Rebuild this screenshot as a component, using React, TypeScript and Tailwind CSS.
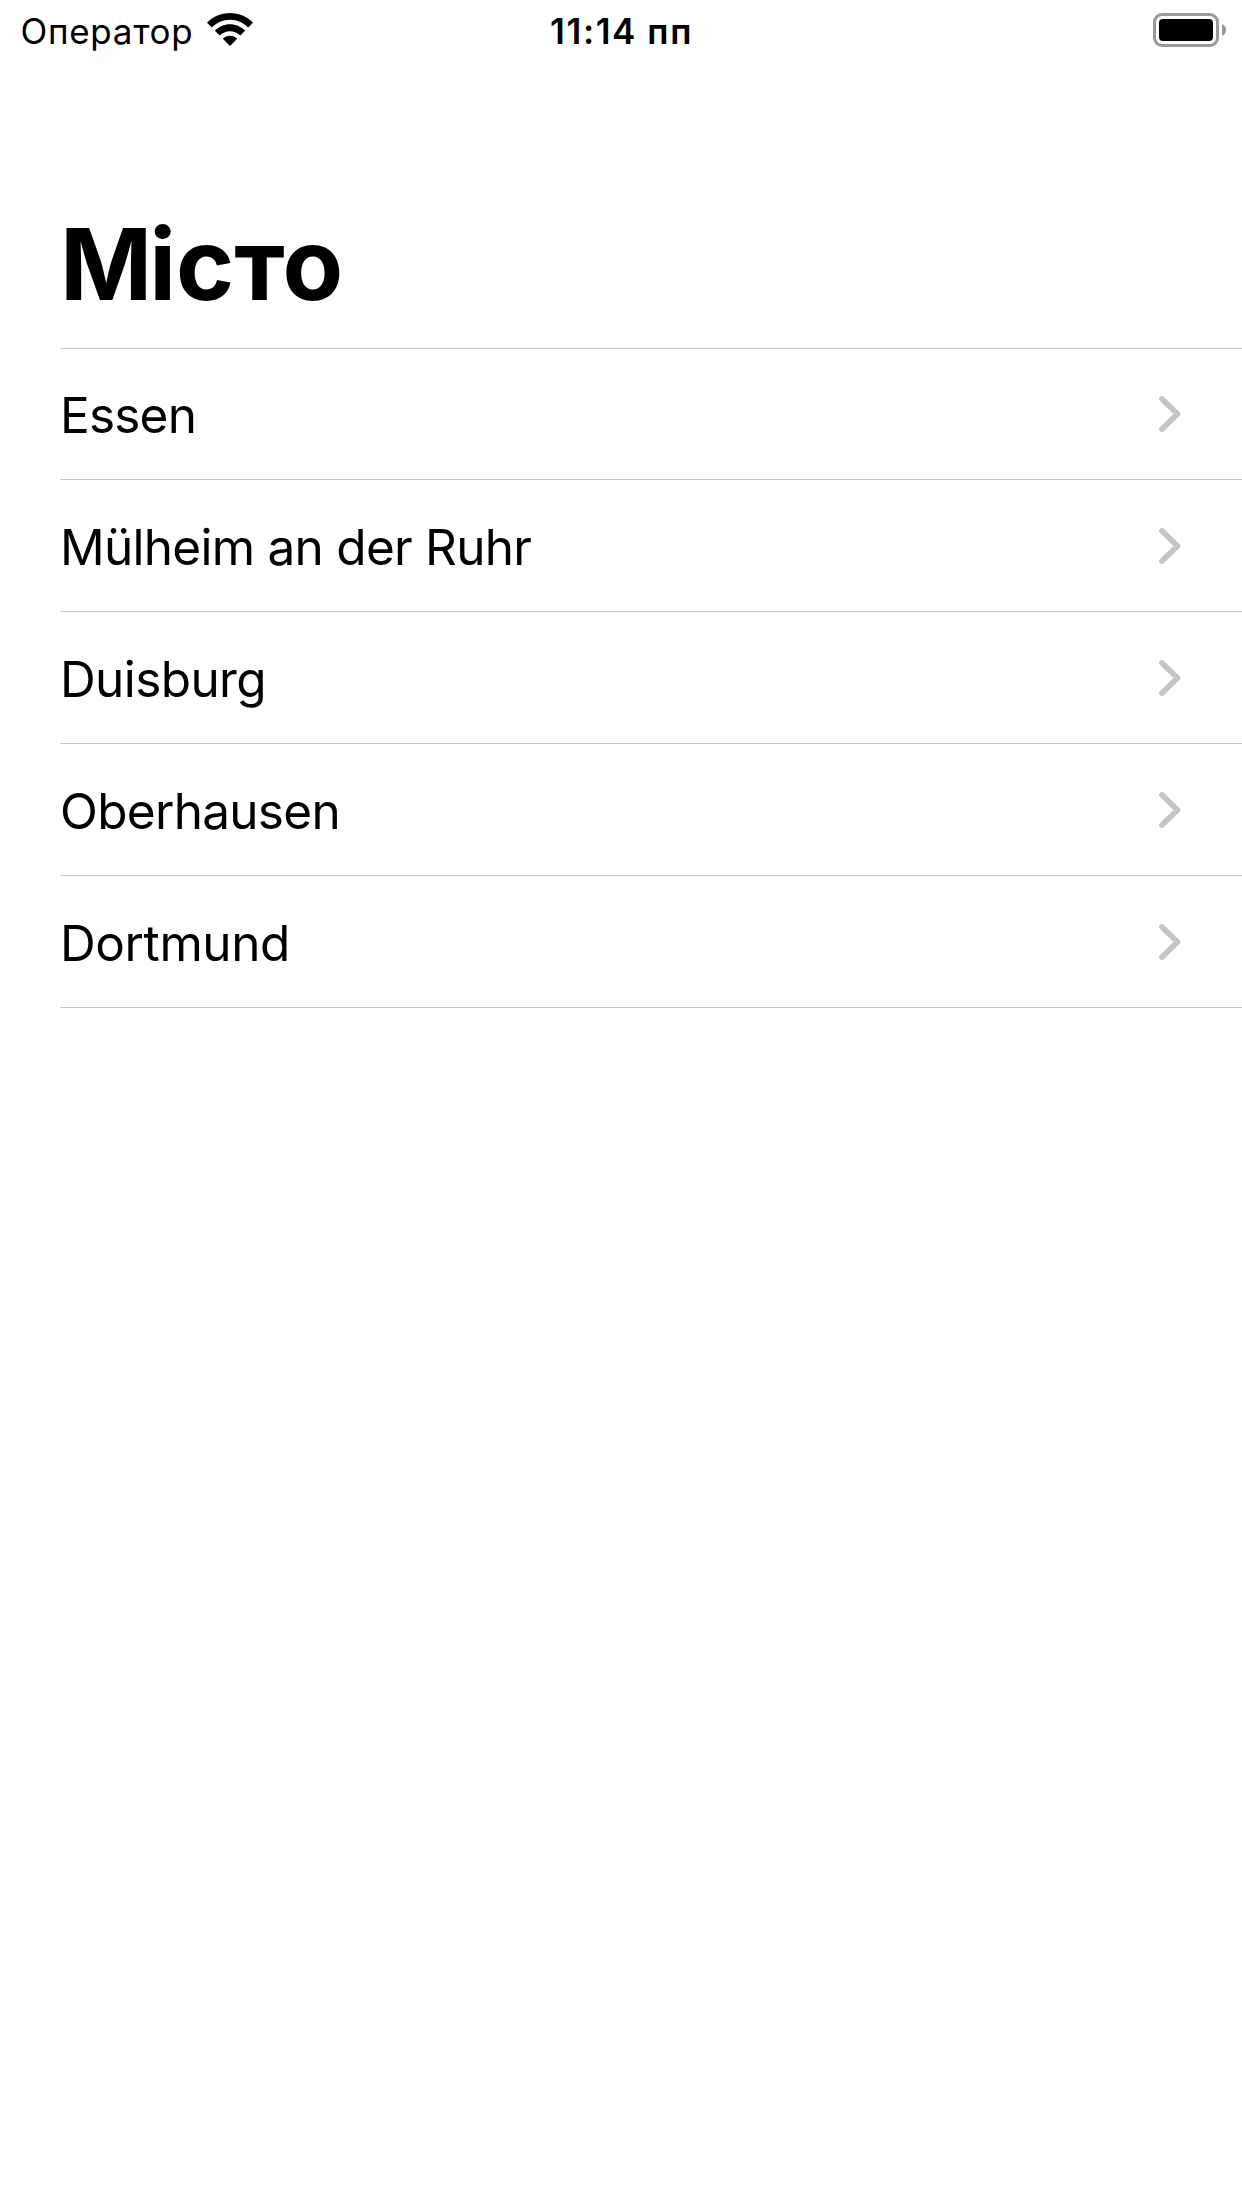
const CITIES = [
  { name: "Essen", tracking: "tracking-[-0.8px]" },
  { name: "Mülheim an der Ruhr", tracking: "tracking-[-0.73px]" },
  { name: "Duisburg", tracking: "tracking-[-0.6px]" },
  { name: "Oberhausen", tracking: "tracking-[-0.7px]" },
  { name: "Dortmund", tracking: "tracking-[-0.4px]" },
];

function WifiIcon() {
  return (
    <svg viewBox="0 0 46 33" className="h-[33px] w-[46px]" aria-hidden="true">
      <path d="M0 9.7C6 3.5 14 0 23 0s17 3.5 23 9.7l-4.9 4.9C36.5 9.7 30 6.8 23 6.8S9.5 9.7 4.9 14.6z" />
      <path d="M7.9 17.7C11.8 13.6 17.1 11.2 23 11.2s11.2 2.4 15.1 6.5l-4.9 4.9C30.6 19.8 27 18.2 23 18.2s-7.6 1.6-10.2 4.4z" />
      <path d="M15.8 25.7C17.7 23.7 20.2 22.7 23 22.7s5.3 1 7.2 3L23 33z" />
    </svg>
  );
}

function BatteryIcon() {
  return (
    <svg viewBox="0 0 73 34" className="h-[34px] w-[73px]" aria-hidden="true">
      <rect x="1.5" y="1.5" width="63" height="31" rx="7.5" fill="none" stroke="#999" strokeWidth="3" />
      <rect x="6" y="6" width="54" height="22" rx="4" />
      <path d="M69 11c2.4 1 4 3.3 4 6s-1.6 5-4 6z" fill="#999" />
    </svg>
  );
}

function Chevron() {
  return (
    <svg viewBox="0 0 22 36" className="h-9 w-[22px]" aria-hidden="true">
      <path
        d="M3 3l15.5 15L3 33"
        fill="none"
        stroke="#c4c4c6"
        strokeWidth="5.7"
        strokeLinecap="round"
        strokeLinejoin="round"
      />
    </svg>
  );
}

function StatusBar() {
  return (
    <header className="grid h-[60px] grid-cols-3 pt-[9px] text-[35px] leading-[44px]">
      <div className="flex items-start pl-5">
        <span className="w-[187px] pl-[0.5px] tracking-[0.7px] whitespace-nowrap">Оператор</span>
        <span className="pt-1">
          <WifiIcon />
        </span>
      </div>
      <div className="pl-px text-center font-semibold tracking-[1.6px]">11:14 пп</div>
      <div className="flex items-start justify-end pt-1 pr-4">
        <BatteryIcon />
      </div>
    </header>
  );
}

export default function App() {
  return (
    <div className="min-h-[2208px] w-[1242px] bg-white font-[Inter,'Liberation_Sans',sans-serif] text-black">
      <StatusBar />
      <main className="pl-[60px]">
        <h1 className="h-[288px] pt-[144px] text-[99px] leading-[120px] font-bold">
          <span className="tracking-[-3px]">М</span>
          <span>істо</span>
        </h1>
        <ul className="border-t border-[#c6c6c8]">
          {CITIES.map((city, i) => (
            <li
              key={city.name}
              className={`flex items-center justify-between border-b border-[#c6c6c8] pr-[61px] ${
                i === 0 ? "h-[131px]" : "h-[132px]"
              }`}
            >
              <span className={`pt-[2px] text-[49.5px] leading-[60px] ${city.tracking}`}>{city.name}</span>
              <Chevron />
            </li>
          ))}
        </ul>
      </main>
    </div>
  );
}
